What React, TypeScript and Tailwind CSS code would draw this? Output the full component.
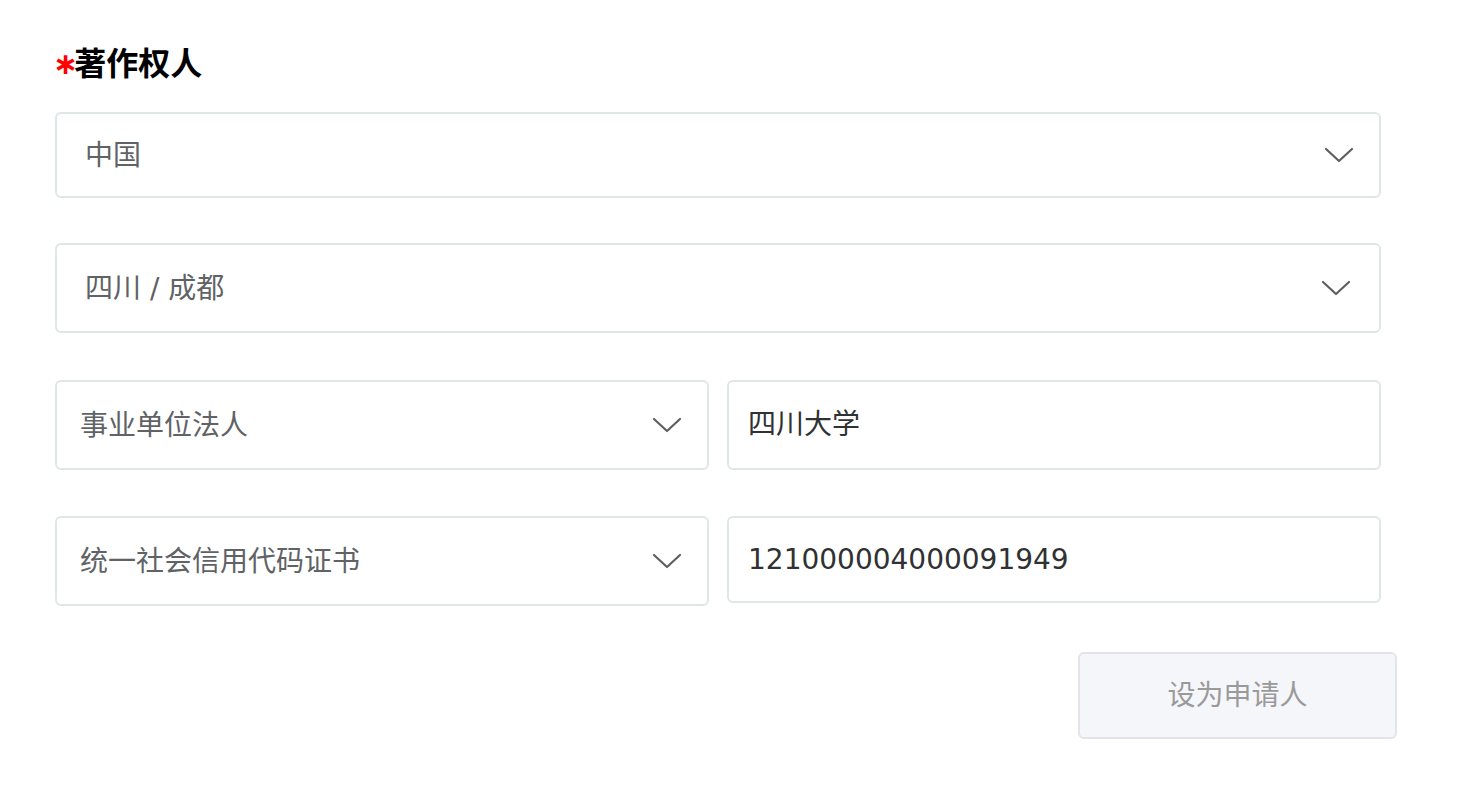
const font = "font-['DejaVu_Sans','Noto_Sans_CJK_SC',sans-serif]";

function Chevron() {
  return (
    <svg width="30" height="16" viewBox="0 0 30 16" fill="none" className="shrink-0">
      <path d="M2 2 L15 14 L28 2" stroke="#5f5f5f" strokeWidth="2.2" strokeLinecap="round" strokeLinejoin="round" />
    </svg>
  );
}

function SelectBox({ value, pad = "pl-[28px] pr-[25px]", h = "h-[90px]" }: { value: string; pad?: string; h?: string }) {
  return (
    <div className={`flex items-center justify-between rounded-[6px] border-2 border-[#dfe6e8] bg-white ${pad} ${h}`}>
      <span className="pt-[2px] text-[28px] text-[#606266]">{value}</span>
      <Chevron />
    </div>
  );
}

function InputBox({ value, h = "h-[90px]" }: { value: string; h?: string }) {
  return (
    <div className={`flex items-center rounded-[6px] border-2 border-[#dfe6e8] bg-white pl-[19px] ${h}`}>
      <span className="text-[28px] text-[#303133]">{value}</span>
    </div>
  );
}

export default function App() {
  return (
    <div className={`${font} h-[796px] w-[1482px] bg-white pl-[55px] pt-[44px]`}>
      <h2 className="flex h-[40px] items-center text-[32px] font-bold text-black">
        <span className="-ml-[2px] text-[30px] leading-none tracking-[-4px] text-[#ff0000]">∗</span>
        <span>著作权人</span>
      </h2>

      <div className="mt-[28px] flex w-[1326px] flex-col">
        <SelectBox value="中国" h="h-[86px]" />
        <div className="mt-[45px]">
          <SelectBox value="四川 / 成都" pad="pl-[28px] pr-[28px]" />
        </div>
        <div className="mt-[47px] grid grid-cols-2 gap-[18px]">
          <SelectBox value="事业单位法人" pad="pl-[23px] pr-[25px]" />
          <InputBox value="四川大学" />
        </div>
        <div className="mt-[46px] grid grid-cols-2 items-start gap-[18px]">
          <SelectBox value="统一社会信用代码证书" pad="pl-[23px] pr-[25px]" />
          <InputBox value="121000004000091949" h="h-[87px]" />
        </div>
      </div>

      <div className="mt-[46px] flex w-[1342px] justify-end">
        <button
          type="button"
          className="h-[87px] w-[319px] rounded-[6px] border-2 border-[#e2e4ea] bg-[#f5f6fa] text-[28px] text-[#9a9a9a]"
        >
          设为申请人
        </button>
      </div>
    </div>
  );
}
